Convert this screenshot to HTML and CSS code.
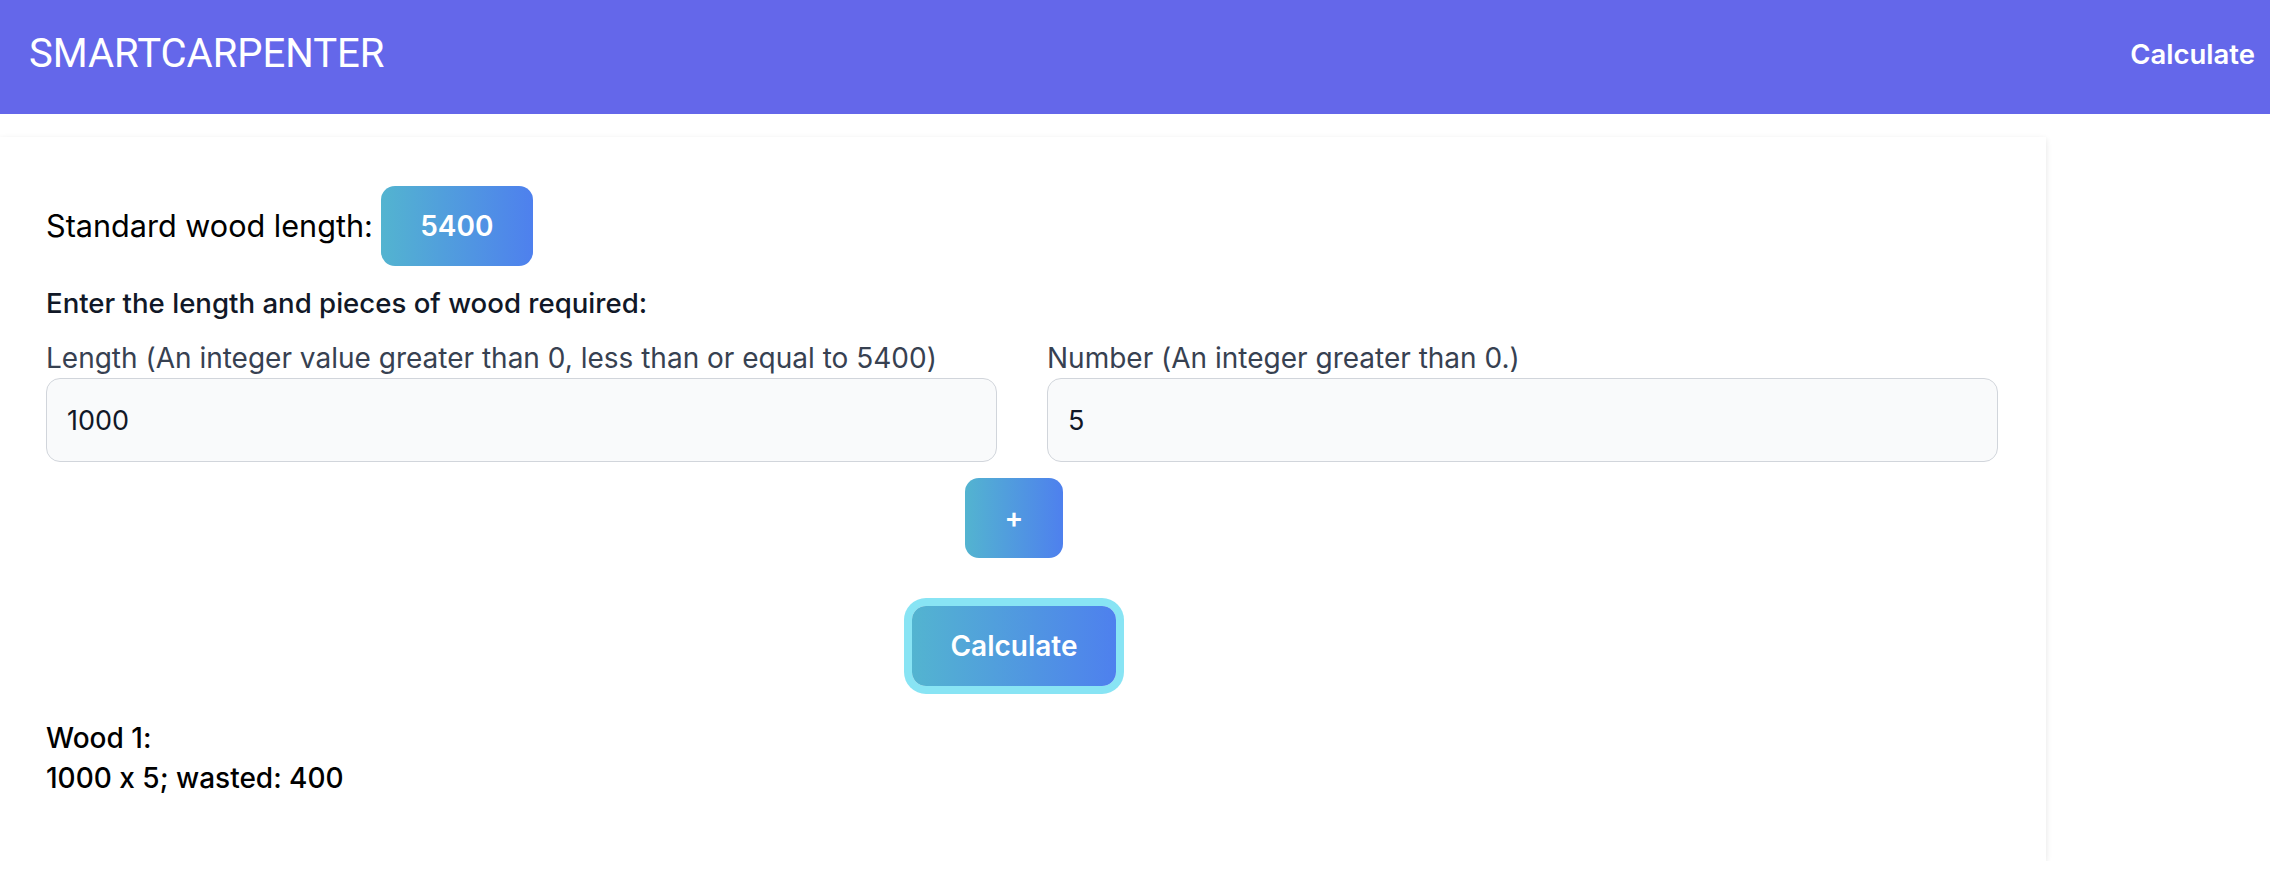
FILE: index.html
```html
<!DOCTYPE html>
<html lang="en">
<head>
<meta charset="utf-8">
<title>SmartCarpenter</title>
<link rel="stylesheet" href="styles.css">
</head>
<body>
<header class="topbar">
  <div class="brand">SMARTCARPENTER</div>
  <nav class="nav"><a class="nav-link" href="#">Calculate</a></nav>
</header>
<main class="card">
  <div class="std-row">
    <span class="std-label">Standard wood length:</span>
    <span class="badge">5400</span>
  </div>
  <p class="prompt">Enter the length and pieces of wood required:</p>
  <div class="fields">
    <label class="field">
      <span class="field-label">Length (An integer value greater than 0, less than or equal to 5400)</span>
      <input class="field-input" type="text" value="1000">
    </label>
    <label class="field">
      <span class="field-label">Number (An integer greater than 0.)</span>
      <input class="field-input" type="text" value="5">
    </label>
  </div>
  <div class="actions">
    <button class="btn btn-plus" type="button">+</button>
    <button class="btn btn-calc" type="button">Calculate</button>
  </div>
  <div class="result">
    <div>Wood 1:</div>
    <div>1000 x 5; wasted: 400</div>
  </div>
</main>
</body>
</html>
```
FILE: styles.css
```css
* { box-sizing: border-box; }
html, body { margin: 0; padding: 0; background: #ffffff; }
body {
  font-family: "Inter", "Liberation Sans", sans-serif;
  font-feature-settings: "calt" 0;
  color: #000;
  width: 2270px;
}
.topbar {
  height: 114px;
  background: #6467ea;
  display: flex;
  align-items: center;
  justify-content: space-between;
  padding: 0 15px 6px 29px;
}
.brand {
  font-family: "Roboto", "Liberation Sans", sans-serif;
  font-size: 40px;
  font-weight: 400;
  color: #fff;
  line-height: 48px;
}
.nav-link {
  color: #fff;
  text-decoration: none;
  font-size: 27.5px;
  font-weight: 600;
  line-height: 40px;
}
.card {
  margin-top: 23px;
  width: 2046px;
  background: #fff;
  box-shadow: 0 2px 6px rgba(0, 0, 0, 0.11);
  padding: 49px 48px 63px 46px;
}
.std-row {
  display: flex;
  align-items: center;
  gap: 8px;
}
.std-label {
  font-size: 30.6px;
  line-height: 40px;
  color: #000;
}
.badge {
  width: 152px;
  height: 80px;
  border-radius: 14px;
  background: linear-gradient(to right, #53b4d0, #4e80ee);
  color: #fff;
  font-size: 28px;
  font-weight: 600;
  display: flex;
  align-items: center;
  justify-content: center;
}
.prompt {
  margin: 17px 0 15px;
  font-size: 27.6px;
  line-height: 40px;
  font-weight: 500;
  color: #111827;
}
.fields {
  display: grid;
  grid-template-columns: 951px 951px;
  column-gap: 50px;
}
.field { display: flex; flex-direction: column; }
.field-label {
  font-size: 28px;
  line-height: 40px;
  color: #374151;
}
.field-input {
  height: 84px;
  border: 1.5px solid #d1d5db;
  border-radius: 14px;
  background: #f9fafb;
  padding: 0 20px;
  font-family: "Inter", "Liberation Sans", sans-serif;
  font-size: 27px;
  color: #111827;
  outline: none;
}
.actions {
  display: flex;
  flex-direction: column;
  align-items: center;
  padding-right: 16px;
  margin-top: 16px;
  gap: 48px;
}
.btn {
  border: 0;
  border-radius: 14px;
  background: linear-gradient(to right, #53b4d0, #4e80ee);
  color: #fff;
  font-family: "Inter", "Liberation Sans", sans-serif;
  font-weight: 600;
  cursor: pointer;
}
.btn-plus {
  width: 98px;
  height: 80px;
  font-size: 28px;
}
.btn-calc {
  width: 204px;
  height: 80px;
  font-size: 28px;
  box-shadow: 0 0 0 8px #88e4f4;
}
.result {
  margin-top: 32px;
  font-size: 28px;
  line-height: 40px;
  font-weight: 500;
  color: #000;
}
```
